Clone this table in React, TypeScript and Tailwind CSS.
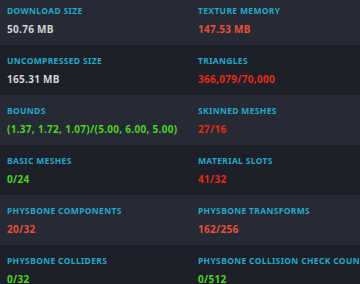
const rows: [string, string, string, string, string, string][] = [
  ["Download Size", "50.76 MB", "text-[#d4d4d4]", "Texture Memory", "147.53 MB", "text-[#e8503a]"],
  ["Uncompressed Size", "165.31 MB", "text-[#d4d4d4]", "Triangles", "366,079/70,000", "text-[#e52a14]"],
  ["Bounds", "(1.37, 1.72, 1.07)/(5.00, 6.00, 5.00)", "text-[#4fd126]", "Skinned Meshes", "27/16", "text-[#e52a14]"],
  ["Basic Meshes", "0/24", "text-[#4fd126]", "Material Slots", "41/32", "text-[#e52a14]"],
  ["PhysBone Components", "20/32", "text-[#e8503a]", "PhysBone Transforms", "162/256", "text-[#e8503a]"],
  ["PhysBone Colliders", "0/32", "text-[#4fd126]", "PhysBone Collision Check Count", "0/512", "text-[#4fd126]"],
];

function Stat({ label, value, color }: { label: string; value: string; color: string }) {
  return (
    <div className="pl-[7px] pr-2 pt-[9px] h-[50px] whitespace-nowrap">
      <div className="text-[8.5px] leading-[14px] font-bold uppercase tracking-[0.04em] text-[#23a8c8]">{label}</div>
      <div className={`text-[10px] leading-[16px] mt-[3px] font-bold tracking-[0.03em] ${color}`}>{value}</div>
    </div>
  );
}

export default function App() {
  return (
    <div className="w-[360px] h-[284px] overflow-hidden bg-[#1d2029]" style={{ fontFamily: '"Noto Sans", sans-serif' }}>
      <div className="w-[382px] -mt-[5px]">
        {rows.map((r, i) => (
          <div key={i} className={`grid grid-cols-2 ${i % 2 === 0 ? "bg-[#262a34]" : "bg-[#1d2029]"}`}>
            <Stat label={r[0]} value={r[1]} color={r[2]} />
            <Stat label={r[3]} value={r[4]} color={r[5]} />
          </div>
        ))}
      </div>
    </div>
  );
}
